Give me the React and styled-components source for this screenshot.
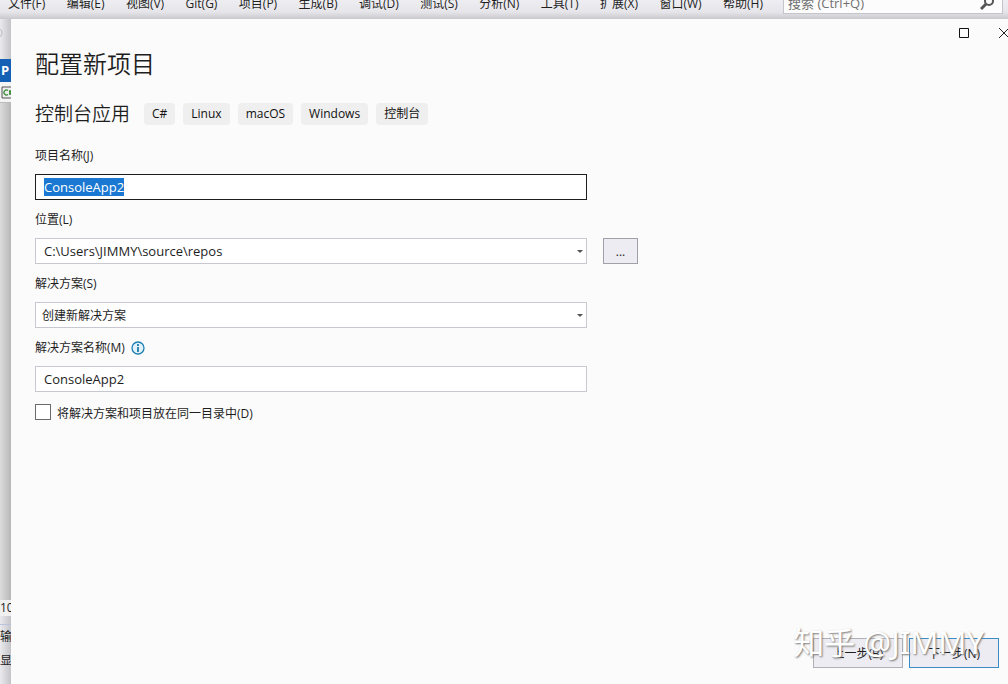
import React, { useEffect, useRef } from "react";
import styled, { createGlobalStyle } from "styled-components";

const menus = [
    "文件(F)", "编辑(E)", "视图(V)", "Git(G)", "项目(P)", "生成(B)", "调试(D)",
    "测试(S)", "分析(N)", "工具(T)", "扩展(X)", "窗口(W)", "帮助(H)",
];

const tags = ["C#", "Linux", "macOS", "Windows", "控制台"];

const App = () => {
    const nameRef = useRef(null);

    useEffect(() => {
        nameRef.current.focus();
        nameRef.current.select();
    }, []);

    return (
        <Page>
            <GlobalStyle />
            <MenuBar>
                <MenuList>
                    {menus.map((m) => (
                        <MenuItem key={m}>{m}</MenuItem>
                    ))}
                </MenuList>
                <SearchBox>
                    <SearchInput aria-label="搜索" placeholder="搜索 (Ctrl+Q)" />
                    <svg width="16" height="20" viewBox="0 0 16 20" fill="none" stroke="#555">
                        <circle cx="9" cy="10" r="4" strokeWidth="2" />
                        <path d="M6 13L1 18" strokeWidth="3" />
                    </svg>
                </SearchBox>
            </MenuBar>
            <Workspace>
                <Strip>
                    <StripTools>
                        <svg width="11" height="14" viewBox="0 0 11 14" fill="none" stroke="#bbb">
                            <circle cx="-3" cy="7" r="5" />
                        </svg>
                    </StripTools>
                    <StripTab>P</StripTab>
                    <StripFile>
                        <svg width="11" height="13" viewBox="0 0 11 13" fill="none">
                            <path d="M12 1H1V12H12" fill="#eee" stroke="#555" />
                            <path
                                d="M7 4.500A2.500 2.500 0 1 0 7 8.500M9 4V9M8 5.500H11M8 7.500H11"
                                stroke="#388a34"
                                strokeWidth="1.300"
                            />
                        </svg>
                    </StripFile>
                    <StripEditor />
                    <StripZoom>100</StripZoom>
                    <StripOutput>
                        <span>输出</span>
                        <span>显示</span>
                    </StripOutput>
                </Strip>
                <Dialog>
                    <TitleBar>
                        <WindowButton aria-label="最大化">
                            <svg width="10" height="10" viewBox="0 0 10 10" fill="none" stroke="#111">
                                <path d="M.5.5H9.500V9.500H.5Z" />
                            </svg>
                        </WindowButton>
                        <WindowButton aria-label="关闭">
                            <svg width="10" height="10" viewBox="0 0 10 10" fill="none" stroke="#222">
                                <path d="M0 0L10 10M10 0L0 10" />
                            </svg>
                        </WindowButton>
                    </TitleBar>
                    <Content>
                        <Title>配置新项目</Title>
                        <Template>
                            <TemplateName>控制台应用</TemplateName>
                            {tags.map((t) => (
                                <Tag key={t}>{t}</Tag>
                            ))}
                        </Template>
                        <Field>
                            <Label htmlFor="name">项目名称(J)</Label>
                            <Row>
                                <TextBox id="name" ref={nameRef} defaultValue="ConsoleApp2" />
                            </Row>
                        </Field>
                        <Field>
                            <Label htmlFor="location">位置(L)</Label>
                            <Row>
                                <Combo id="location" inset={8} size={13} value="C:\Users\JIMMY\source\repos" />
                                <BrowseButton aria-label="浏览">...</BrowseButton>
                            </Row>
                        </Field>
                        <Field>
                            <Label htmlFor="solution">解决方案(S)</Label>
                            <Row>
                                <Combo id="solution" inset={6} size={12} value="创建新解决方案" />
                            </Row>
                        </Field>
                        <Field>
                            <Label htmlFor="solutionName">
                                解决方案名称(M)
                                <svg width="14" height="14" viewBox="0 0 14 14" fill="none" stroke="#1c7fb0">
                                    <circle cx="7" cy="7" r="6" fill="#e3f2fa" strokeWidth="1.300" />
                                    <path d="M7 6V11M7 3V5" strokeWidth="1.800" />
                                </svg>
                            </Label>
                            <Row>
                                <TextBox id="solutionName" defaultValue="ConsoleApp2" />
                            </Row>
                        </Field>
                        <CheckRow>
                            <CheckBox type="checkbox" id="sameDir" />
                            <label htmlFor="sameDir">将解决方案和项目放在同一目录中(D)</label>
                        </CheckRow>
                    </Content>
                    <Footer>
                        <StepButton>上一步(B)</StepButton>
                        <StepButton $primary>下一步(N)</StepButton>
                        <Watermark>知乎 @JIMMY</Watermark>
                    </Footer>
                </Dialog>
            </Workspace>
        </Page>
    );
};

const Combo = ({ id, value, inset, size }) => (
    <ComboBox>
        <Select id={id} $inset={inset} $size={size}>
            <option>{value}</option>
        </Select>
        <Caret width="6" height="3" viewBox="0 0 6 3">
            <path d="M0 0H6L3 3Z" fill="#555" />
        </Caret>
    </ComboBox>
);

export default App;

const GlobalStyle = createGlobalStyle`
    * {
        box-sizing: border-box;
    }
    body {
        margin: 0;
        color: #1e1e1e;
        font-family: "Open Sans", "Noto Sans CJK SC", sans-serif;
        font-size: 12px;
    }
    button, input, select {
        font-family: inherit;
        color: inherit;
    }
`;

const Page = styled.div`
    display: flex;
    flex-direction: column;
    min-height: 100vh;
    overflow: hidden;
    background-color: #eeeef2;
`;

const MenuBar = styled.nav`
    display: flex;
    align-items: flex-start;
    gap: 20px;
    height: 19px;
    padding: 0 5px 0 8px;
    background: linear-gradient(#eeeef2 0, #e6e6ea 12px, #c8c8cd 19px);
`;

const MenuList = styled.div`
    display: flex;
    flex: 0 1 755px;
    justify-content: space-between;
`;

const MenuItem = styled.span`
    line-height: 8px;
    white-space: nowrap;
`;

const SearchBox = styled.div`
    display: flex;
    align-items: flex-end;
    flex: 1;
    height: 14px;
    min-width: 0;
    padding: 0 6px 0 4px;
    border: 1px solid #c4c4cc;
    border-top: none;
    background-color: #fcfcfc;

    svg {
        flex-shrink: 0;
        margin-bottom: 2px;
    }
`;

const SearchInput = styled.input`
    flex: 1;
    min-width: 0;
    height: 20px;
    padding: 0;
    border: none;
    background: none;
    font-size: 13px;

    &::placeholder {
        color: #717171;
        opacity: 1;
    }
`;

const Workspace = styled.div`
    display: flex;
    flex: 1;
`;

const Strip = styled.aside`
    display: flex;
    flex-direction: column;
    width: 11px;
    overflow: hidden;
    background: linear-gradient(90deg, #ebebef, #c4c4c8);
`;

const StripTools = styled.div`
    height: 40px;
    padding-top: 7px;
`;

const StripTab = styled.div`
    height: 23px;
    padding-left: 1px;
    background-color: #1460b4;
    color: white;
    font-size: 13px;
    font-weight: bold;
    line-height: 23px;
`;

const StripFile = styled.div`
    height: 21px;
    padding: 4px 0 0 1px;
    border-bottom: 1px solid #bbb;
    background-color: #f4f4f4;
`;

const StripEditor = styled.div`
    flex: 1;
    background: linear-gradient(90deg, #dcdcdc, #b8b8b8);
`;

const StripZoom = styled.div`
    height: 16px;
    margin-bottom: 8px;
    background-color: #f0f0f0;
    line-height: 16px;
`;

const StripOutput = styled.div`
    display: flex;
    flex-direction: column;
    height: 60px;
    border-top: 1px solid #b9c4dc;
    line-height: 24px;
    white-space: nowrap;
`;

const Dialog = styled.main`
    display: flex;
    flex: 1;
    flex-direction: column;
    min-width: 0;
    background-color: #fbfbfb;
`;

const TitleBar = styled.header`
    display: flex;
    justify-content: flex-end;
    gap: 20px;
    height: 29px;
    margin-right: -6px;
`;

const WindowButton = styled.button`
    display: flex;
    align-items: center;
    justify-content: center;
    width: 20px;
    height: 28px;
    padding: 0;
    border: none;
    background: none;
`;

const Content = styled.div`
    flex: 1;
    padding: 0 24px;
`;

const Title = styled.h1`
    margin: 0;
    font-size: 24px;
    font-weight: 350;
    line-height: 32px;
`;

const Template = styled.div`
    display: flex;
    align-items: center;
    gap: 8px;
    margin: 20px 0 18px;
`;

const TemplateName = styled.h2`
    margin: 0 6px 0 0;
    font-size: 19px;
    font-weight: 350;
    line-height: 28px;
`;

const Tag = styled.span`
    padding: 0 8px;
    border-radius: 4px;
    background-color: #efefef;
    color: #111;
    line-height: 22px;
`;

const Field = styled.div`
    margin-bottom: 10px;
`;

const Label = styled.label`
    display: flex;
    align-items: center;
    gap: 6px;
    margin-bottom: 8px;
    line-height: 20px;
`;

const Row = styled.div`
    display: flex;
    gap: 16px;
`;

const TextBox = styled.input`
    flex: 0 1 552px;
    min-width: 0;
    height: 26px;
    padding: 0 8px;
    border: 1px solid #c8c8d0;
    background-color: white;
    font-size: 13px;

    &:focus {
        border-color: #1e1e1e;
        outline: none;
    }
    &::selection {
        background-color: #1a78d2;
        color: white;
    }
`;

const ComboBox = styled.div`
    display: grid;
    flex: 0 1 552px;
    align-items: center;
    min-width: 0;
`;

const Select = styled.select`
    grid-area: 1 / 1;
    width: 100%;
    height: 26px;
    padding: 0 ${(props) => props.$inset}px;
    border: 1px solid #c8c8d0;
    border-radius: 0;
    appearance: none;
    background-color: white;
    font-size: ${(props) => props.$size}px;
`;

const Caret = styled.svg`
    grid-area: 1 / 1;
    justify-self: end;
    margin-right: 4px;
    pointer-events: none;
`;

const BrowseButton = styled.button`
    width: 35px;
    height: 26px;
    padding: 0;
    border: 1px solid #a0a0a8;
    background-color: #ececf2;
    font-size: 12px;
`;

const CheckRow = styled.div`
    display: flex;
    align-items: flex-start;
    gap: 6px;
    padding-top: 2px;
    line-height: 20px;
`;

const CheckBox = styled.input`
    width: 16px;
    height: 16px;
    margin: 0;
    border: 1px solid #6b6b6b;
    appearance: none;
    background-color: white;
`;

const Footer = styled.footer`
    position: relative;
    display: flex;
    justify-content: flex-end;
    gap: 6px;
    padding: 0 9px 16px;
`;

const StepButton = styled.button`
    width: 90px;
    height: 30px;
    padding: 0;
    border: 1px solid ${(props) => (props.$primary ? "#3c8cc4" : "#b0b0b6")};
    background-color: #ececf2;
    font-size: 12px;
`;

const Watermark = styled.span`
    position: absolute;
    right: 24px;
    bottom: 22px;
    color: white;
    font-family: "Noto Sans", "Noto Sans CJK SC", sans-serif;
    font-size: 31px;
    line-height: 40px;
    text-shadow: 1px 1px 2px #777;
    pointer-events: none;
    white-space: nowrap;
`;
